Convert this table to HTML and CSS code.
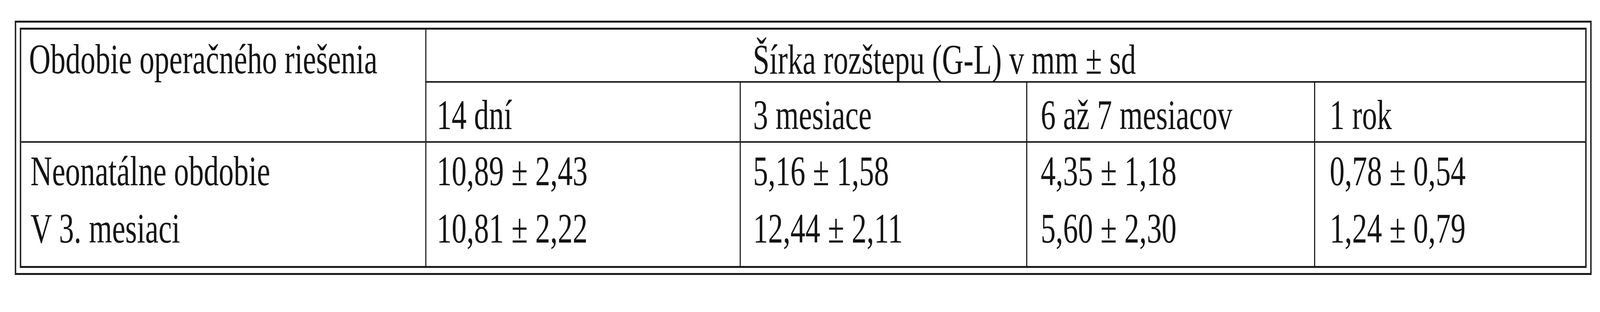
FILE: index.html
```html
<!DOCTYPE html>
<html lang="sk">
<head>
<meta charset="utf-8">
<title>Šírka rozštepu</title>
<link rel="stylesheet" href="styles.css">
</head>
<body>
<div class="page">
  <div class="frame" id="frame">
    <div class="grid">
      <div class="cell c1 head-main">Obdobie operačného riešenia</div>
      <div class="cell span-head">Šírka rozštepu (G-L) v mm ± sd</div>
      <div class="cell sub c2">14 dní</div>
      <div class="cell sub c3">3 mesiace</div>
      <div class="cell sub c4">6 až 7 mesiacov</div>
      <div class="cell sub c5">1 rok</div>
      <div class="cell body c1b"><div>Neonatálne obdobie</div><div>V 3. mesiaci</div></div>
      <div class="cell body c2 line"><div>10,89 ± 2,43</div><div>10,81 ± 2,22</div></div>
      <div class="cell body c3 line"><div>5,16 ± 1,58</div><div>12,44 ± 2,11</div></div>
      <div class="cell body c4 line"><div>4,35 ± 1,18</div><div>5,60 ± 2,30</div></div>
      <div class="cell body c5 line"><div>0,78 ± 0,54</div><div>1,24 ± 0,79</div></div>
    </div>
  </div>
</div>
<script src="app.js"></script>
</body>
</html>
```
FILE: styles.css
```css
* { box-sizing: border-box; }
html, body { margin: 0; padding: 0; background: #ffffff; overflow: hidden; }
body {
  font-family: "Liberation Serif", "Times New Roman", serif;
  font-size: 107px;
  color: #141414;
}
.page {
  --sx: 0.714834;
  width: 100%;
  height: 800px;
  overflow: hidden;
}
.frame {
  margin: 53px 0 0 53px;
  width: 5647px;
  border: 5px solid #1c1c1c;
  padding: 13px;
  transform-origin: -53px 0;
  transform: scaleX(var(--sx));
}
.grid {
  display: grid;
  grid-template-columns: 1447px 1126px 1026px 1031px 971px;
  grid-template-rows: 136px 154px 316px;
  border: 5px solid #1c1c1c;
  width: 5611px;
}
.cell {
  line-height: 107px;
  white-space: nowrap;
}
.head-main {
  grid-row: 1 / 3;
  grid-column: 1;
  border-bottom: 4px solid #1c1c1c;
  padding: 23px 0 0 28px;
}
.span-head {
  grid-row: 1;
  grid-column: 2 / 6;
  border-left: 4px solid #1c1c1c;
  border-bottom: 4px solid #1c1c1c;
  padding: 24px 0 0 1169px;
}
.sub {
  border-left: 4px solid #1c1c1c;
  border-bottom: 4px solid #1c1c1c;
  padding-top: 30px;
}
.body {
  line-height: 147px;
  padding-top: 0;
}
.line { border-left: 4px solid #1c1c1c; }
.c1b { padding-left: 33px; }
.c2 { padding-left: 37px; }
.c3 { padding-left: 44px; }
.c4 { padding-left: 48px; }
.c5 { padding-left: 52px; }
```
FILE: app.js
```js
// The design is laid out for a 5730px-wide canvas; fit it to the actual viewport width.
(function () {
  var page = document.querySelector('.page');
  function fit() {
    var sx = Math.min(1, window.innerWidth / 5730);
    page.style.setProperty('--sx', String(sx));
  }
  fit();
  window.addEventListener('resize', fit);
})();
```
